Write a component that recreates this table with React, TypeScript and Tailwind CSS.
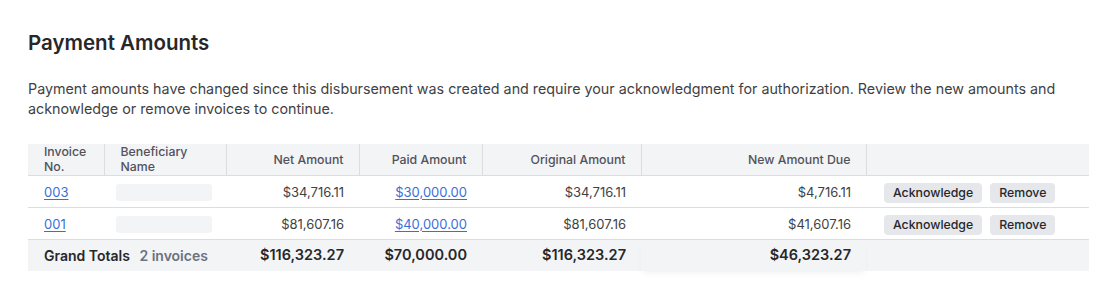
import React from 'react';

type Row = {
  invoice: string;
  net: string;
  paid: string;
  original: string;
  due: string;
};

const rows: Row[] = [
  { invoice: '003', net: '$34,716.11', paid: '$30,000.00', original: '$34,716.11', due: '$4,716.11' },
  { invoice: '001', net: '$81,607.16', paid: '$40,000.00', original: '$81,607.16', due: '$41,607.16' },
];

export default function App() {
  return (
    <div className="bg-white px-7 pt-[29px] pb-7 text-[#27272a]" style={{ fontFamily: 'Inter, "Noto Sans", sans-serif' }}>
      <h2 className="text-[20.5px] leading-7 font-semibold">Payment Amounts</h2>

      <p className="mt-[22px] text-[14.3px] leading-5 text-[#3f3f46]">
        Payment amounts have changed since this disbursement was created and require your acknowledgment for authorization. Review the new amounts and acknowledge or remove invoices to continue.
      </p>

      <table className="mt-[25px] w-[1061px] border-collapse text-[13px]">
        <thead>
          <tr className="h-[31px] bg-[#f3f4f6] text-[12.3px] leading-[15px] font-medium text-[#52525b] border-b border-[#dcdde0]">
            <th className="w-[76px] pl-4 text-left font-medium border-r border-[#dcdde0]">Invoice<br />No.</th>
            <th className="w-[122px] pl-4 text-left font-medium border-r border-[#dcdde0]">Beneficiary<br />Name</th>
            <th className="w-[133px] pr-[15px] text-right font-medium border-r border-[#dcdde0]">Net Amount</th>
            <th className="w-[123px] pr-[15px] text-right font-medium border-r border-[#dcdde0]">Paid Amount</th>
            <th className="w-[159px] pr-[15px] text-right font-medium border-r border-[#dcdde0]">Original Amount</th>
            <th className="w-[225px] pr-[15px] text-right font-medium border-r border-[#dcdde0]">New Amount Due</th>
            <th />
          </tr>
        </thead>
        <tbody>
          {rows.map((r) => (
            <tr key={r.invoice} className="h-8 border-b border-[#dcdde0] text-[#3f3f46] [&>td]:pt-[3px]">
              <td className="pl-4">
                <a href="#" className="text-[#3b6fd8] underline underline-offset-2 decoration-[#3b6fd8]">{r.invoice}</a>
              </td>
              <td className="pl-3">
                <div className="h-[17px] w-[96px] rounded-[3px] bg-[#f3f4f6]" />
              </td>
              <td className="pr-[15px] text-right">{r.net}</td>
              <td className="pr-[15px] text-right">
                <a href="#" className="text-[#3b6fd8] underline underline-offset-2 decoration-[#3b6fd8]">{r.paid}</a>
              </td>
              <td className="pr-[15px] text-right">{r.original}</td>
              <td className="pr-[15px] text-right">{r.due}</td>
              <td className="pl-[18px]">
                <div className="flex gap-2">
                  <button className="h-5 rounded bg-[#e5e7eb] px-[9px] text-[12.3px] leading-5 font-medium text-[#27272a]">Acknowledge</button>
                  <button className="h-5 rounded bg-[#e5e7eb] px-[9px] text-[12.3px] leading-5 font-medium text-[#27272a]">Remove</button>
                </div>
              </td>
            </tr>
          ))}
          <tr className="h-8 bg-[#f3f4f6] text-[14px] font-semibold text-[#27272a]">
            <td colSpan={2} className="pl-4 whitespace-nowrap">
              Grand Totals <span className="ml-1.5 text-[#6b7280]">2 invoices</span>
            </td>
            <td className="pr-[15px] text-right text-[14.5px]">$116,323.27</td>
            <td className="pr-[15px] text-right text-[14.5px]">$70,000.00</td>
            <td className="pr-[15px] text-right text-[14.5px]">$116,323.27</td>
            <td className="pr-[15px] text-right text-[14.5px] shadow-[0_4px_6px_-2px_rgba(0,0,0,0.06)]">$46,323.27</td>
            <td />
          </tr>
        </tbody>
      </table>
    </div>
  );
}
